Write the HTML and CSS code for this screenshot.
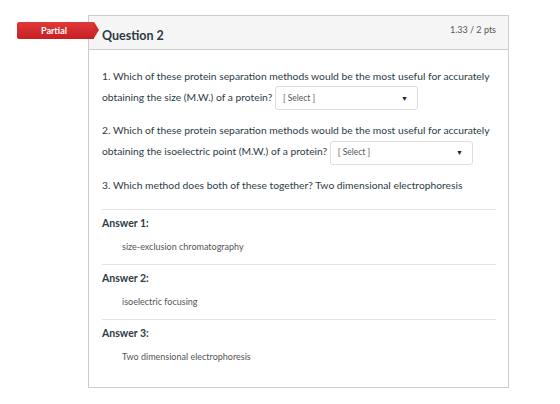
FILE: index.html
```html
<!DOCTYPE html>
<html lang="en">

<head>
    <meta charset="UTF-8">
    <meta name="viewport" content="width=device-width, initial-scale=1.0">
    <title>Quiz results</title>

    <link rel="stylesheet" href="styles.css">
</head>

<body>
    <main>
        <div class="question">
            <div class="badge">Partial</div>
            <div class="header">
                <h2>Question 2</h2>
                <span class="pts">1.33 / 2 pts</span>
            </div>
            <div class="content">
                <p class="line">1. Which of these protein separation methods would be the most useful for accurately</p>
                <p class="line">obtaining the size (M.W.) of a protein? <span class="select">[ Select ]<i>&#9660;</i></span></p>

                <p class="line gap">2. Which of these protein separation methods would be the most useful for accurately</p>
                <p class="line">obtaining the isoelectric point (M.W.) of a protein? <span class="select">[ Select ]<i>&#9660;</i></span></p>

                <p class="line gap">3. Which method does both of these together? Two dimensional electrophoresis</p>

                <div class="answers">
                    <div class="answer">
                        <h3>Answer 1:</h3>
                        <p>size-exclusion chromatography</p>
                    </div>
                    <div class="answer">
                        <h3>Answer 2:</h3>
                        <p>isoelectric focusing</p>
                    </div>
                    <div class="answer">
                        <h3>Answer 3:</h3>
                        <p>Two dimensional electrophoresis</p>
                    </div>
                </div>
            </div>
        </div>
    </main>
</body>

</html>
```

FILE: styles.css
```css
*,
html {
    margin: 0;
    padding: 0;
    box-sizing: border-box;
}

body {
    font-family: Lato, "Open Sans", sans-serif;
    color: #2d3b45;
    background: #fff;
}

main {
    padding: 15px 0 0 88px;
}

.question {
    position: relative;
    width: 421px;
    height: 373px;
    border: 1px solid #c7cdd1;
}

.header {
    display: flex;
    justify-content: space-between;
    align-items: flex-start;
    height: 34px;
    background: #f5f5f5;
    border-bottom: 1px solid #c7cdd1;
    padding: 0 12px 0 13px;
}

.header h2 {
    font-size: 12.5px;
    font-weight: 700;
    margin-top: 12px;
    line-height: 16px;
}

.pts {
    font-size: 9px;
    color: #555;
    margin-top: 8px;
}

.badge {
    position: absolute;
    left: -72px;
    top: 6px;
    width: 77px;
    height: 17px;
    background: linear-gradient(#e0393a, #c71f22);
    color: #fff;
    font-size: 9px;
    font-weight: 700;
    line-height: 17px;
    padding-left: 24px;
    border-radius: 2px 0 0 2px;
}

.badge::after {
    content: "";
    position: absolute;
    right: -5px;
    top: 0;
    border-left: 5px solid #d02a2c;
    border-top: 8.5px solid transparent;
    border-bottom: 8.5px solid transparent;
}

.content {
    padding: 16px 12px 0 13px;
}

.line {
    font-size: 10.3px;
    line-height: 21px;
    white-space: nowrap;
}

.line.gap {
    margin-top: 12px;
}

.select {
    display: inline-flex;
    justify-content: space-between;
    align-items: center;
    width: 143px;
    height: 24px;
    margin: -2px 0;
    border: 1px solid #ddd;
    border-radius: 3px;
    padding: 0 9px 0 7px;
    font-size: 8.5px;
    color: #555;
    vertical-align: middle;
}

.select i {
    font-style: normal;
    font-size: 7px;
    color: #222;
}

.answers {
    margin-top: 13px;
}

.answer {
    border-top: 1px solid #e3e3e3;
    height: 55px;
    padding-top: 6px;
}

.answer h3 {
    font-size: 10.5px;
    font-weight: 700;
    line-height: 14px;
}

.answer p {
    font-size: 9px;
    color: #555;
    margin: 11px 0 0 20px;
}
```
